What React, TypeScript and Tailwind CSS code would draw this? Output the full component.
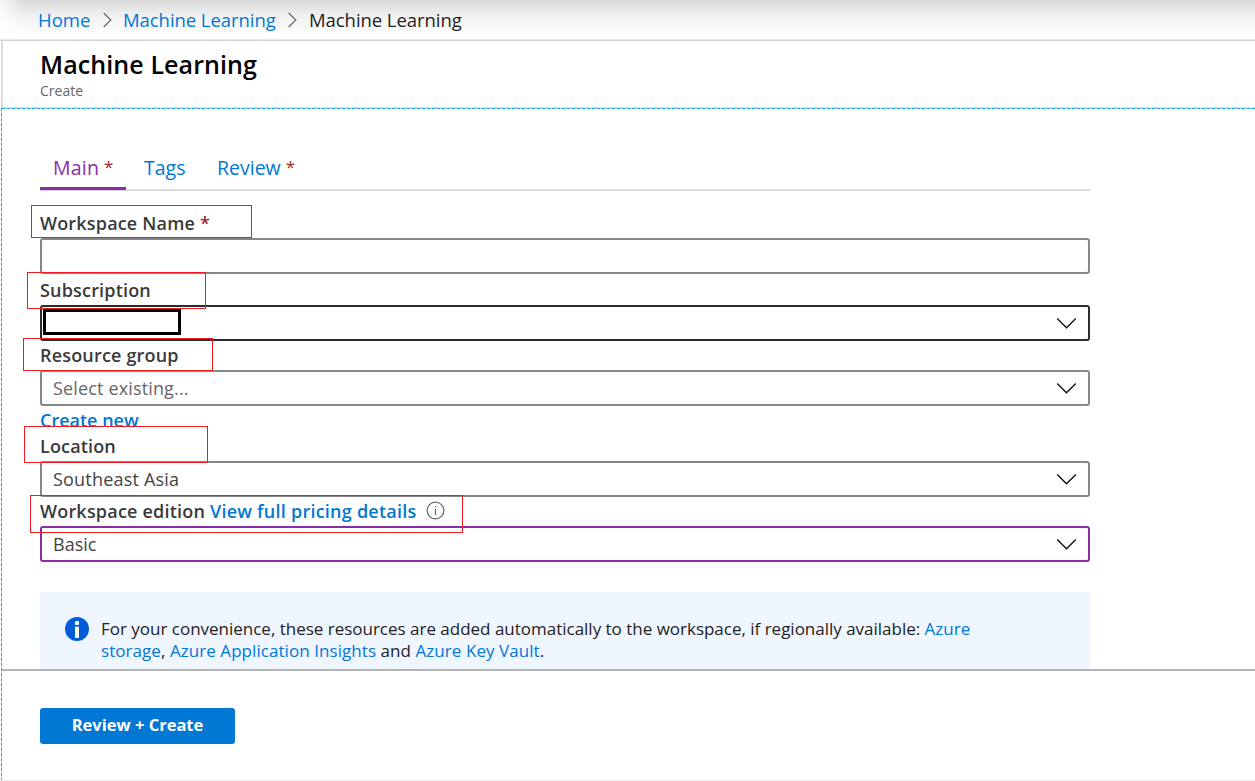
import type { ReactNode } from "react";

function Crumb() {
  return (
    <svg width="9" height="16" viewBox="0 0 9 16" className="shrink-0" fill="none" stroke="#666" strokeWidth="1.2">
      <path d="M0.7 1 L7.8 8 L0.7 15" />
    </svg>
  );
}

function Chevron() {
  return (
    <svg width="20" height="12" viewBox="0 0 20 12" className="shrink-0" fill="none" stroke="#111" strokeWidth="1.4">
      <path d="M1.2 1.5 L10.5 10.7 L19.8 1.5" />
    </svg>
  );
}

function Select({ tone, children }: { tone: string; children?: ReactNode }) {
  return (
    <div className={`flex h-9 items-center justify-between rounded-[3px] border-2 bg-white pr-[12px] pl-[11px] ${tone}`}>
      <span className="leading-[30px]">{children}</span>
      <Chevron />
    </div>
  );
}

function Mark({ box }: { box: string }) {
  return <div className={`pointer-events-none absolute border border-[#ed1c24] ${box}`} />;
}

export default function App() {
  return (
    <div className="flex h-[781px] w-[1255px] flex-col overflow-hidden bg-white font-['Open_Sans','Noto_Sans',sans-serif] text-[#3a3a3a]">
      <nav className="relative flex h-[41px] shrink-0 items-center border-b border-[#d2d2d2] bg-linear-to-b from-[#dadada] via-[#f3f3f3] via-45% to-white to-90% pl-[38px] text-[18.5px]">
        <div className="absolute inset-y-0 left-0 w-6 bg-linear-to-r from-white/80 to-transparent" />
        <div className="absolute inset-x-0 bottom-0 h-px bg-[#e9e9e9]" />
        <a className="w-[65px] whitespace-nowrap text-[#0078d4]">Home</a>
        <Crumb />
        <a className="ml-[11px] w-[165px] whitespace-nowrap tracking-[-0.06px] text-[#0078d4]">Machine Learning</a>
        <Crumb />
        <span className="ml-[12px] whitespace-nowrap tracking-[-0.06px] text-[#222]">Machine Learning</span>
      </nav>

      <header className="ml-px h-[67px] shrink-0 border-b border-l-2 border-b-[#dedede] border-l-[#dcdcdc] pl-[37px]">
        <h1 className="mt-[5px] text-[25px] leading-[36px] font-semibold tracking-[0.1px] text-black">Machine Learning</h1>
        <p className="text-[14px] leading-[18px] text-[#666]">Create</p>
      </header>

      <div className="flex h-[672px] shrink-0 bg-white">
        <div className="ml-px w-px shrink-0 bg-[repeating-linear-gradient(180deg,#00b7f0_0_3px,#cfcfcf_3px_5px)]" />
        <div className="flex w-[1253px] flex-col">
          <div className="h-px shrink-0 bg-[repeating-linear-gradient(90deg,#00b7f0_0_3px,#cfcfcf_3px_5px)]" />
          <main className="relative h-[560px] shrink-0 overflow-hidden pl-[38px] text-[18px]">
            <div className="w-[1050px]">
              <div className="relative flex h-[82px] items-end border-b border-[#d2d2d2] text-[19.5px] leading-[28px] text-[#0078d4]">
                <div className="absolute inset-x-0 bottom-0 h-px bg-[#e7e7e7]" />
                <div className="relative flex h-[36px] w-[86px] border-b-3 border-[#8a2da5] pl-[13px] whitespace-nowrap text-[#8a2da5]">
                  <span className="tracking-[0.2px]">Main</span>
                  <span className="ml-[5px] text-[17px] leading-[25px] text-[#a4262c]">*</span>
                </div>
                <div className="h-[36px] w-[73px] pl-[18px]">Tags</div>
                <div className="flex h-[36px] pl-[18px] whitespace-nowrap">
                  Review <span className="ml-[5px] text-[17px] leading-[25px] text-[#a4262c]">*</span>
                </div>
              </div>

              <label className="flex h-[47px] items-end pb-[2px] leading-[26px] font-semibold tracking-[0.18px]">
                Workspace Name&nbsp;<span className="text-[#a4262c]">*</span>
              </label>
              <div className="h-9 rounded-[3px] border-2 border-[#868686]" />
              <label className="flex h-[31px] items-center pt-px font-semibold tracking-[0.18px]">Subscription</label>
              <Select tone="border-[#2d2d2d]" />
              <label className="flex h-[29px] items-center font-semibold tracking-[0.18px]">Resource group</label>
              <Select tone="border-[#868686] text-[#666] tracking-[0.15px]">Select existing...</Select>
              <div className="h-5 overflow-hidden">
                <a className="block leading-[28px] font-semibold text-[#0078d4]">Create new</a>
              </div>
              <label className="flex h-[35px] items-center pb-[1px] pt-[6px] font-semibold tracking-[0.15px]">Location</label>
              <Select tone="border-[#868686] text-[#444] tracking-[0.2px]">Southeast Asia</Select>
              <label className="flex h-[29px] items-center whitespace-nowrap font-semibold tracking-[0.2px]">
                Workspace edition&nbsp;<a className="tracking-[0.24px] text-[#0078d4]">View full pricing details</a>
                <svg width="19" height="19" viewBox="0 0 19 19" className="-mt-[2px] ml-[9px]" fill="none" stroke="#666">
                  <circle cx="9.5" cy="9.5" r="8.4" strokeWidth="1.2" />
                  <path d="M9.5 8v6M9.5 5v1.3" strokeWidth="1.2" />
                </svg>
              </label>
              <Select tone="border-[#8a2da5] text-[#444]">Basic</Select>

              <div className="mt-[30px] flex h-[100px] rounded-[3px] bg-[#eff6ff] pt-[26px] pl-[25px] text-[17px] leading-[22px] text-[#222]">
                <svg width="24" height="24" viewBox="0 0 24 24" className="mt-[-1px] mr-[12px] shrink-0">
                  <circle cx="12" cy="12" r="12" fill="#015cda" />
                  <circle cx="12" cy="6" r="2.2" fill="#fff" />
                  <path d="M10 9.7h4V21h-4z" fill="#fff" />
                </svg>
                <p className="whitespace-nowrap tracking-[-0.01px]">
                  For your convenience, these resources are added automatically to the workspace, if regionally available:{" "}
                  <a className="text-[#0078d4]">Azure</a>
                  <br />
                  <span className="tracking-[0.06px]">
                    <a className="text-[#0078d4]">storage</a>, <a className="text-[#0078d4]">Azure Application Insights</a> and{" "}
                    <a className="text-[#0078d4]">Azure Key Vault</a>.
                  </span>
                </p>
              </div>
            </div>
            <Mark box="left-[29px] top-[96px] h-[33px] w-[221px]" />
            <Mark box="left-[25px] top-[163px] h-[37px] w-[179px]" />
            <div className="absolute top-[200px] left-[41px] h-[26px] w-[138px] border-3 border-black bg-white" />
            <Mark box="left-[21px] top-[229px] h-[33px] w-[190px]" />
            <Mark box="left-[22px] top-[317px] h-[37px] w-[184px]" />
            <Mark box="left-[28px] top-[386px] h-[38px] w-[433px]" />
          </main>
          <footer className="h-[111px] shrink-0 border-t-2 border-[#b5b5b5] pt-[37px] pl-[38px]">
            <button className="h-9 w-[195px] rounded-[3px] bg-[#0078d4] pb-[2px] text-[16.5px] font-bold text-white">Review + Create</button>
          </footer>
        </div>
      </div>
      <div className="h-px shrink-0 bg-[#ededed]" />
    </div>
  );
}
